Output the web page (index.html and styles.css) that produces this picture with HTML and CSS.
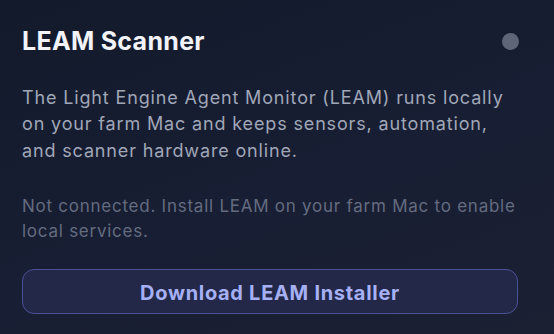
FILE: index.html
```
<!DOCTYPE html>
<html lang="en">
<head>
  <meta charset="UTF-8">
  <meta name="viewport" content="width=device-width, initial-scale=1.0">
  <title>LEAM Scanner</title>
  <link rel="stylesheet" href="styles.css">
</head>
<body>
  <div class="card">
    <div class="head">
      <h2>LEAM Scanner</h2>
      <span class="status"></span>
    </div>
    <p class="desc">The Light Engine Agent Monitor (LEAM) runs locally on your farm Mac and keeps sensors, automation, and scanner hardware online.</p>
    <p class="note">Not connected. Install LEAM on your farm Mac to enable local services.</p>
    <a href="#" class="btn">Download LEAM Installer</a>
  </div>
</body>
</html>
```
FILE: styles.css
```
*{margin:0;padding:0;box-sizing:border-box;}
html, body{height:100%;font-family:Inter,"Noto Sans",sans-serif;}
body{background:linear-gradient(160deg,#131a2b 0%,#181e33 55%,#1b2033 100%);overflow:hidden;}
.card{display:flex;flex-direction:column;padding:27px 36px 0 22px;}
.head{display:flex;align-items:center;justify-content:space-between;}
.head h2{font-size:25px;font-weight:700;line-height:29px;color:#f1f3f8;letter-spacing:0.3px;}
.status{width:17px;height:17px;border-radius:50%;background:#5f6678;margin-right:-1px;}
.desc{margin-top:29px;font-size:18px;line-height:26.4px;color:#a0a7b8;letter-spacing:0.85px;}
.note{margin-top:30px;font-size:17px;line-height:25px;color:#646c80;letter-spacing:0.75px;}
.btn{display:flex;align-items:center;justify-content:center;margin-top:25px;height:45px;border:1.5px solid #4a5296;border-radius:12px;background:#232849;color:#a6b0f4;font-size:20px;font-weight:700;letter-spacing:0.7px;text-decoration:none;padding-top:2px;}
```
